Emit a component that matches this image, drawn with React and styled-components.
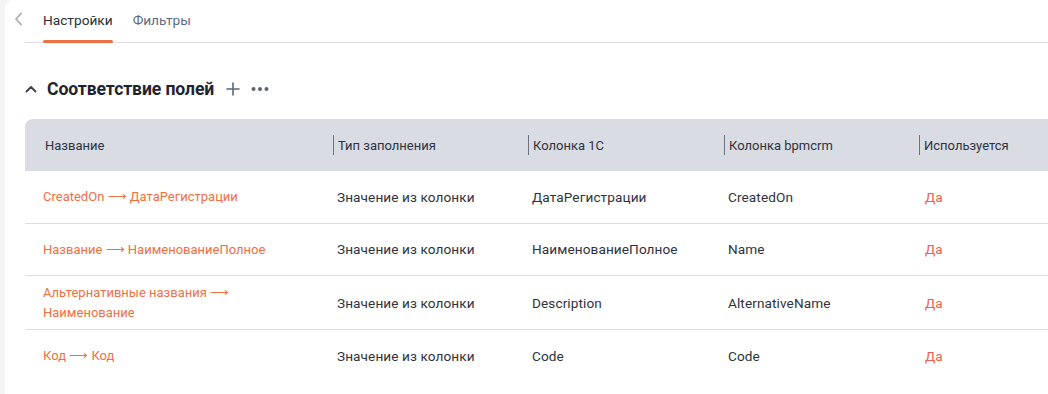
import React from "react"
import styled, { createGlobalStyle } from "styled-components"

const GlobalStyle = createGlobalStyle`
  html, body {
    margin: 0;
    padding: 0;
    background: #f4f5f9;
    font-family: Roboto, "Noto Sans", Arial, sans-serif;
    overflow: hidden;
  }
`

const accentColor = "#f06f43"
const yesColor = "#ef5f4f"
const textColor = "#2e3240"

const Page = styled.div`
  display: flex;
  width: 1048px;
  height: 394px;
  padding-left: 5px;
  box-sizing: border-box;
`

const Panel = styled.div`
  flex: 1;
  background: #ffffff;
  border-top-left-radius: 8px;
  padding-left: 20px;
  overflow: hidden;
`

const TabBar = styled.div`
  display: flex;
  align-items: flex-end;
  height: 42px;
  border-bottom: 1px solid #dcdee4;
  position: relative;
`

const BackButton = styled.div`
  position: absolute;
  left: -14px;
  top: 10px;
  width: 14px;
  height: 18px;
  display: flex;
  align-items: center;
  justify-content: center;
  color: #a9adb6;
`

const Tab = styled.div`
  position: relative;
  margin-left: ${(p) => (p.first ? "18px" : "20px")};
  padding-bottom: 14px;
  font-size: 13.7px;
  color: ${(p) => (p.active ? "#2a2e38" : "#5b6a88")};
  &::after {
    content: "";
    display: ${(p) => (p.active ? "block" : "none")};
    position: absolute;
    left: 0;
    right: 0;
    bottom: -1px;
    height: 3px;
    border-radius: 2px;
    background: ${accentColor};
  }
`

const SectionHeader = styled.div`
  display: flex;
  align-items: center;
  height: 30px;
  margin-top: 31px;
  color: #1f2330;
`

const SectionTitle = styled.div`
  font-size: 17.6px;
  font-weight: 700;
  margin-left: 10px;
  margin-right: 12px;
  letter-spacing: -0.1px;
`

const IconButton = styled.div`
  display: flex;
  align-items: center;
  justify-content: center;
  color: #5e6472;
  margin-right: ${(p) => p.gap || 0}px;
`

const Table = styled.div`
  margin-top: 15px;
  width: 1100px;
`

const HeaderRow = styled.div`
  display: grid;
  grid-template-columns: 308px 195px 196px 195px 206px;
  height: 52px;
  background: #d9dce3;
  border-top-left-radius: 8px;
  align-items: center;
`

const HeaderCell = styled.div`
  display: flex;
  align-items: center;
  height: 20px;
  font-size: 13px;
  color: ${textColor};
  padding-left: ${(p) => (p.first ? "20px" : "4px")};
  border-left: ${(p) => (p.first ? "none" : "1px solid #6c7283")};
`

const Row = styled.div`
  display: grid;
  grid-template-columns: 308px 195px 196px 195px 206px;
  align-items: center;
  min-height: 51.5px;
  border-bottom: ${(p) => (p.last ? "none" : "1px solid #dcdee4")};
`

const Cell = styled.div`
  font-size: ${(p) => (p.first ? "13px" : "13.6px")};
  letter-spacing: ${(p) => (p.first ? "0" : "0.1px")};
  line-height: 20px;
  color: ${(p) => p.color || textColor};
  padding: ${(p) => (p.first ? "7px 60px 6px 18px" : `6px 8px 6px ${p.yes ? 6 : 4}px`)};
`

const columns = ["Название", "Тип заполнения", "Колонка 1С", "Колонка bpmcrm", "Используется"]

const rows = [
  {
    name: "CreatedOn ⟶ ДатаРегистрации",
    type: "Значение из колонки",
    source: "ДатаРегистрации",
    target: "CreatedOn",
  },
  {
    name: "Название ⟶ НаименованиеПолное",
    type: "Значение из колонки",
    source: "НаименованиеПолное",
    target: "Name",
  },
  {
    name: "Альтернативные названия ⟶ Наименование",
    type: "Значение из колонки",
    source: "Description",
    target: "AlternativeName",
  },
  {
    name: "Код ⟶ Код",
    type: "Значение из колонки",
    source: "Code",
    target: "Code",
  },
]

function ChevronLeft() {
  return (
    <svg width="9" height="14" viewBox="0 0 9 14" fill="none">
      <path d="M7 1.5L2 7l5 5.5" stroke="currentColor" strokeWidth="1.8" strokeLinecap="round" strokeLinejoin="round" />
    </svg>
  )
}

function ChevronUp() {
  return (
    <svg width="12" height="8" viewBox="0 0 12 8" fill="none">
      <path d="M1.5 6.5L6 2l4.5 4.5" stroke="#3a3f4c" strokeWidth="1.8" strokeLinecap="round" strokeLinejoin="round" />
    </svg>
  )
}

function PlusIcon() {
  return (
    <svg width="14" height="14" viewBox="0 0 14 14" fill="none">
      <path d="M7 1v12M1 7h12" stroke="currentColor" strokeWidth="1.6" strokeLinecap="round" />
    </svg>
  )
}

function DotsIcon() {
  return (
    <svg width="18" height="6" viewBox="0 0 18 6">
      <circle cx="2.5" cy="3" r="2" fill="currentColor" />
      <circle cx="9" cy="3" r="2" fill="currentColor" />
      <circle cx="15.5" cy="3" r="2" fill="currentColor" />
    </svg>
  )
}

export default function App() {
  return (
    <Page>
      <GlobalStyle />
      <Panel>
        <TabBar>
          <BackButton>
            <ChevronLeft />
          </BackButton>
          <Tab first active>
            Настройки
          </Tab>
          <Tab>Фильтры</Tab>
        </TabBar>
        <SectionHeader>
          <ChevronUp />
          <SectionTitle>Соответствие полей</SectionTitle>
          <IconButton gap={11}>
            <PlusIcon />
          </IconButton>
          <IconButton>
            <DotsIcon />
          </IconButton>
        </SectionHeader>
        <Table>
          <HeaderRow>
            {columns.map((col, i) => (
              <HeaderCell key={col} first={i === 0}>
                {col}
              </HeaderCell>
            ))}
          </HeaderRow>
          {rows.map((row, i) => (
            <Row key={row.name} last={i === rows.length - 1}>
              <Cell first color={accentColor}>
                {row.name}
              </Cell>
              <Cell>{row.type}</Cell>
              <Cell>{row.source}</Cell>
              <Cell>{row.target}</Cell>
              <Cell yes color={yesColor}>
                Да
              </Cell>
            </Row>
          ))}
        </Table>
      </Panel>
    </Page>
  )
}
